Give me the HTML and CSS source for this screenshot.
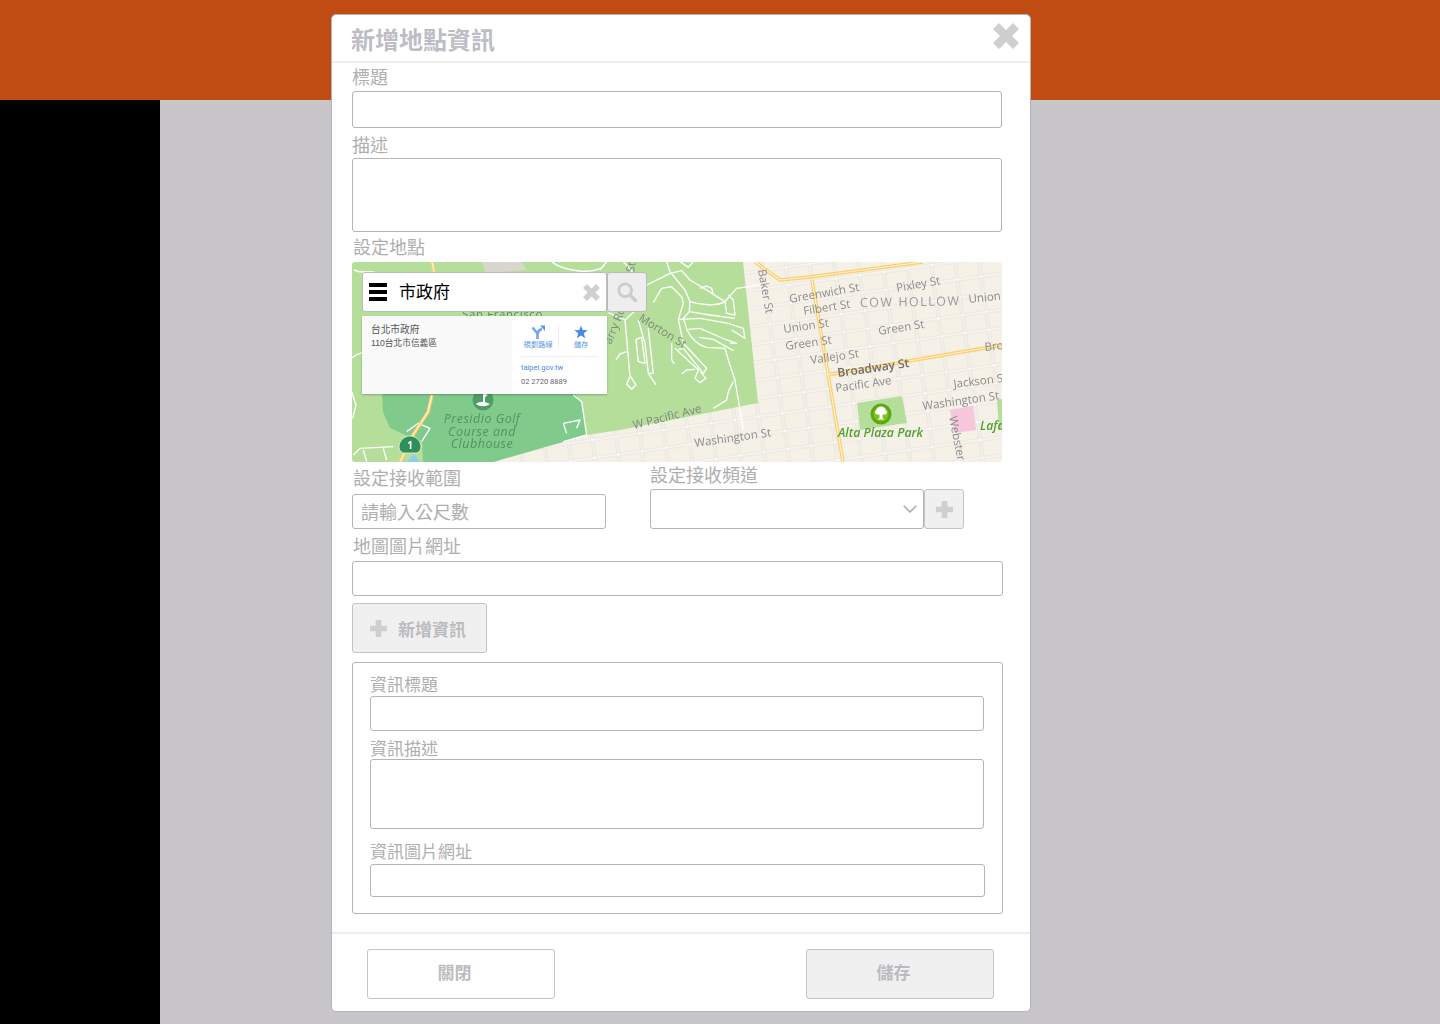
FILE: index.html
```html
<!DOCTYPE html>
<html lang="zh-Hant">
<head>
    <meta charset="UTF-8">
    <title>新增地點資訊</title>
    <link rel="stylesheet" href="styles.css">
</head>
<body>
    <div class="top-bar"></div>
    <div class="page">
        <div class="side"></div>
        <div class="main"></div>
    </div>

    <div class="modal">
        <div class="modal-head">
            <h2>新增地點資訊</h2>
            <svg class="modal-close" viewBox="0 0 26 26"><path d="M6 0l7 7 7-7 6 6-7 7 7 7-6 6-7-7-7 7-6-6 7-7-7-7z"/></svg>
        </div>
        <div class="modal-body">
            <label class="lbl lbl-1">標題</label>
            <input class="field h37" type="text">
            <label class="lbl lbl-2">描述</label>
            <textarea class="field h74"></textarea>
            <label class="lbl lbl-3">設定地點</label>

            <div class="map">
                <svg class="map-art" viewBox="0 0 650 200" width="650" height="200">
                    <defs>
                        <pattern id="streets" width="24" height="18" patternUnits="userSpaceOnUse" patternTransform="rotate(-8 400 100) translate(3 2)">
                            <path d="M0 9H24M12 0V18" stroke="#d6d2c7" stroke-width="2.600" fill="none"/>
                            <path d="M0 9H24M12 0V18" stroke="#fff" stroke-width="1.300" fill="none"/>
                        </pattern>
                        <g id="roads">
                            <path d="M80 0L84 18"/>
                            <path d="M80 133L76 150 61 173 48 200"/>
                            <path d="M460 18L491 200"/>
                            <path d="M475 113L633 86 650 83"/>
                            <path d="M403 0L428 18 458 15 571 0"/>
                        </g>
                    </defs>
                    <rect width="650" height="200" fill="#f6f1e6"/>
                    <rect width="650" height="200" fill="url(#streets)"/>
                    <path d="M0 0H391L406 141 268 168 235 173 141 200H0z" fill="#b5de9b"/>
                    <path d="M30 130H221L230 140 235 173 141 200H71L70 180 53 173 38 166 31 150z" fill="#80cb8c"/>
                    <path d="M505 141L550 134 555 161 508 168z" fill="#b5de9b"/>
                    <path d="M598 148L621 144 624 168 603 171z" fill="#f6c6dc"/>
                    <path d="M645 138l5-1v30h-3z" fill="#b5de9b"/>

                    <!-- roads right of the card, traced at 3x -->
                    <g class="park-road" transform="translate(248 -2) scale(.3333)">
                        <path d="M200 5L210 35 255 90 270 125C300 135 350 140 375 125L410 85 510 70"/>
                        <path d="M270 125L268 155 250 175 258 200C265 225 290 255 320 262L375 265 385 300 405 360 430 510"/>
                        <path d="M210 40L245 32 270 60 320 90 375 125"/>
                        <path d="M300 85L320 78 335 85 340 105"/>
                        <path d="M375 125L380 160 405 165 400 120 385 105"/>
                        <path d="M268 155L330 165 405 175"/>
                        <path d="M235 178L300 175 385 190 430 205 435 235 395 210"/>
                        <path d="M265 208L300 205 380 240 410 250 390 250"/>
                        <path d="M298 232L340 238 400 272"/>
                        <path d="M210 40L140 75 130 130 75 180 25 158"/>
                        <path d="M160 128L185 85 215 80 245 110 250 130 235 178 250 250 320 325 310 340 250 265 235 268"/>
                        <path d="M225 265L295 330 285 355 300 368 318 355 300 335"/>
                        <path d="M245 342L260 330 285 328"/>
                        <path d="M215 250V298L222 310 215 300"/>
                        <path d="M75 180L90 350 80 372 95 388 108 375 92 350"/>
                        <path d="M115 180L135 250 145 340 168 375"/>
                        <path d="M145 205L160 340 145 340"/>
                        <path d="M108 238L125 232 135 310 115 305z"/>
                        <path d="M48 300L60 282 80 275"/>
                        <path d="M400 365L385 395 380 420 340 445"/>
                        <path d="M240 5L265 22 280 5"/>
                        <path d="M70 5L110 50M20 5L0 30"/>
                    </g>
                    <!-- roads under the card, traced at 3x -->
                    <g class="park-road" transform="translate(-2 123) scale(.3333)">
                        <path d="M670 30L695 50 710 150 640 170"/>
                        <path d="M640 115L650 145M640 115L690 105 680 130"/>
                        <path d="M5 20L18 60 8 100"/>
                        <path d="M10 210L30 190 130 185M100 190L110 225M40 195L50 230"/>
                        <path d="M170 140L205 115 240 130 215 170"/>
                    </g>
                    <path class="park-road-line" d="M2 8C14 14 20 4 30 16M200 0C210 8 240 14 252 4M0 96C10 86 22 94 30 88"/>

                    <path d="M130 0l40 0 4 8-40 3z" fill="#d9d6cf"/>
                    <path d="M55 200l7-8 6 8z" fill="#8fcdf0"/>
                    <use href="#roads" class="road-outer"/>
                    <use href="#roads" class="road-inner"/>

                    <text class="m-lab" transform="translate(438 41) rotate(-10)">Greenwich St</text>
                    <text class="m-lab" transform="translate(545 30) rotate(-10)">Pixley St</text>
                    <text class="m-lab" transform="translate(452 53) rotate(-9)">Filbert St</text>
                    <text class="m-dist" transform="translate(508 45) rotate(-1)">COW HOLLOW</text>
                    <text class="m-lab" transform="translate(617 41) rotate(-6)">Union</text>
                    <text class="m-lab" transform="translate(432 71) rotate(-8)">Union St</text>
                    <text class="m-lab" transform="translate(527 73) rotate(-9)">Green St</text>
                    <text class="m-lab" transform="translate(434 88) rotate(-8)">Green St</text>
                    <text class="m-lab" transform="translate(459 102) rotate(-8)">Vallejo St</text>
                    <text class="m-main" transform="translate(486 115) rotate(-8)">Broadway St</text>
                    <text class="m-lab" transform="translate(633 89) rotate(-6)">Bro</text>
                    <text class="m-lab" transform="translate(484 130) rotate(-8)">Pacific Ave</text>
                    <text class="m-lab" transform="translate(602 126) rotate(-7)">Jackson S</text>
                    <text class="m-lab" transform="translate(571 148) rotate(-8)">Washington St</text>
                    <text class="m-lab" transform="translate(343 185) rotate(-8)">Washington St</text>
                    <text class="m-lab m-on-green" transform="translate(282 167) rotate(-14)">W Pacific Ave</text>
                    <text class="m-lab" transform="translate(406 8) rotate(80)">Baker St</text>
                    <text class="m-lab" transform="translate(597 155) rotate(79)">Webster St</text>
                    <text class="m-lab m-on-green" transform="translate(286 58) rotate(32)">Morton St</text>
                    <text class="m-lab m-on-green" transform="translate(259 83) rotate(-68)">arry Rd</text>
                    <text class="m-lab m-on-green" transform="translate(282 11) rotate(-80)">St</text>
                    <text class="m-lab m-city" transform="translate(110 56)">San Francisco</text>
                    <text class="m-park" transform="translate(486 175)">Alta Plaza Park</text>
                    <text class="m-park" transform="translate(628 168)">Lafa</text>
                    <text class="m-golf" x="130" y="161">Presidio Golf</text>
                    <text class="m-golf" x="130" y="174">Course and</text>
                    <text class="m-golf" x="130" y="186">Clubhouse</text>

                    <circle cx="131" cy="138" r="10.500" fill="#4e9e63"/>
                    <path d="M124 142c4 3 10 3 14 0-3-1-4-2-5-2v-5l3-2-5-2v9c-2 0-5 0-7 2z" fill="#fff"/>
                    <path d="M47 185c0-6 5-11 11-11s11 5 11 11c0 3-2 5-4 6H51c-2-1-4-3-4-6z" fill="#2f8f5a" stroke="#e8f4e0" stroke-width=".8"/>
                    <text class="m-shield" x="58" y="187">1</text>
                    <circle cx="529" cy="152" r="10.500" fill="#5fa70f"/>
                    <circle cx="529" cy="152" r="7.500" fill="#7cc223"/>
                    <path d="M529 144.500c3 0 4.500 2 4.500 3.500 2 .5 2 4.500-.5 4.500h-2.500v3.500l2 1.500h-7l2-1.500v-3.500H525c-2.500 0-2.500-4-.5-4.500 0-1.500 1.500-3.500 4.500-3.500z" fill="#fff"/>
                </svg>

                <div class="search-box">
                    <svg class="burger" viewBox="0 0 18 18"><path d="M0 0h18v4H0zM0 7h18v4H0zM0 14h18v4H0z"/></svg>
                    <span class="search-text">市政府</span>
                    <svg class="search-clear" viewBox="0 0 26 26"><path d="M6 0l7 7 7-7 6 6-7 7 7 7-6 6-7-7-7 7-6-6 7-7-7-7z"/></svg>
                </div>
                <div class="search-btn">
                    <svg viewBox="0 0 20 20" width="20" height="20"><circle cx="8.200" cy="8.200" r="6.400" fill="none" stroke="#ccc" stroke-width="2.800"/><path d="M13 13l5.500 5.500" stroke="#ccc" stroke-width="3.400" stroke-linecap="round"/></svg>
                </div>

                <div class="place-card">
                    <div class="place-left">
                        <div class="place-name">台北市政府</div>
                        <div class="place-addr">110台北市信義區</div>
                    </div>
                    <div class="place-right">
                        <div class="place-actions">
                            <div class="place-act act-route">
                                <svg viewBox="0 0 14 14" width="14" height="14"><path d="M6.500 14V8.500L1.500 2.500M6.500 9C7 6 9 4.500 11 4" fill="none" stroke="#74a8ea" stroke-width="2.600"/><path d="M9 .5H14V6z" fill="#5b97e6"/></svg>
                                <span>規劃路線</span>
                            </div>
                            <div class="place-act act-save">
                                <svg viewBox="0 0 14 14" width="14" height="14"><path d="M7 .5l1.700 4.500 5 .2-3.900 3.100 1.400 5L7 10.500l-4.200 2.800 1.400-5L.3 5.200l5-.2z" fill="#4a8be0"/></svg>
                                <span>儲存</span>
                            </div>
                        </div>
                        <div class="place-link">taipei.gov.tw</div>
                        <div class="place-tel">02 2720 8889</div>
                    </div>
                </div>
            </div>

            <div class="range-row">
                <div class="range-col">
                    <label class="lbl">設定接收範圍</label>
                    <input class="field range-input" type="text" placeholder="請輸入公尺數">
                </div>
                <div class="channel-col">
                    <label class="lbl">設定接收頻道</label>
                    <div class="channel-line">
                        <div class="select-wrap">
                            <select class="field channel-select"></select>
                            <svg class="chevron" viewBox="0 0 14 8" width="14" height="8"><path d="M.7.7L7 7 13.300.7" fill="none" stroke="#aaa" stroke-width="1.500"/></svg>
                        </div>
                        <button class="plus-btn" type="button">
                            <svg class="plus" viewBox="0 0 18 18"><path d="M6 0h6v6h6v6h-6v6H6v-6H0V6h6z"/></svg>
                        </button>
                    </div>
                </div>
            </div>

            <label class="lbl lbl-map">地圖圖片網址</label>
            <input class="field wide h35" type="text">
            <button class="add-btn" type="button">
                <svg class="plus" viewBox="0 0 18 18"><path d="M6 0h6v6h6v6h-6v6H6v-6H0V6h6z"/></svg>
                新增資訊
            </button>

            <div class="info-box">
                <label class="lbl-sm">資訊標題</label>
                <input class="field inner h35" type="text">
                <label class="lbl-sm lbl-sm-2">資訊描述</label>
                <textarea class="field inner h70"></textarea>
                <label class="lbl-sm lbl-sm-3">資訊圖片網址</label>
                <input class="field inner-wide h33" type="text">
            </div>
        </div>
        <div class="modal-foot">
            <button class="foot-btn" type="button">關閉</button>
            <button class="foot-btn foot-save" type="button">儲存</button>
        </div>
    </div>
</body>
</html>
```
FILE: styles.css
```css
* {
    box-sizing: border-box;
}
html, body {
    margin: 0;
    height: 100%;
}
body {
    height: 1024px;
    overflow: hidden;
    font-family: "Liberation Sans", "Noto Sans CJK TC", sans-serif;
    background: #c7c5c8;
}
.top-bar {
    height: 100px;
    background: #c04b13;
}
.page {
    display: flex;
    height: 924px;
}
.side {
    width: 160px;
    background: #000;
}
.main {
    flex: 1;
    background: #c7c5c8;
}

/* modal */
.modal {
    position: absolute;
    left: 331px;
    top: 14px;
    width: 700px;
    height: 998px;
    background: #fff;
    border: 1px solid #b4b4bc;
    border-radius: 5px;
    display: flex;
    flex-direction: column;
}
.modal-head {
    height: 48px;
    flex: none;
    padding: 9px 19px 0;
    border-bottom: 2px solid #eee;
    position: relative;
}
.modal-head h2 {
    margin: 0;
    font-size: 24px;
    line-height: 34px;
    font-weight: 700;
    color: #bdbdc5;
}
.modal-close {
    position: absolute;
    left: 661px;
    top: 8px;
    width: 26px;
    height: 26px;
    fill: #cfcfd1;
}
.modal-body {
    flex: 1;
    padding: 4px 0 0 20px;
}
.modal-foot {
    flex: none;
    height: 79px;
    border-top: 2px solid #eee;
    padding: 15px 36px 0 35px;
    display: flex;
    justify-content: space-between;
}

/* form bits */
.lbl {
    display: block;
    height: 24px;
    font-size: 18px;
    line-height: 24px;
    color: #aeaeae;
}
.lbl-1 {
    line-height: 22px;
}
.lbl-2 {
    margin-top: 6px;
}
.lbl-3 {
    margin-top: 4px;
    margin-bottom: 2px;
    padding-left: 1px;
}
.lbl-sm {
    display: block;
    height: 21px;
    font-size: 17px;
    line-height: 21px;
    color: #aeaeae;
}
.lbl-sm-2 {
    margin-top: 7px;
    line-height: 23px;
}
.lbl-sm-3 {
    margin-top: 11px;
    height: 24px;
    line-height: 26px;
}
.field {
    display: block;
    width: 650px;
    margin: 0;
    padding: 0 9px;
    background: #fff;
    border: 1px solid #b4b4bc;
    border-radius: 3px;
    font-family: inherit;
    font-size: 18px;
    resize: none;
    outline: none;
}
.field::placeholder {
    color: #aeaeae;
    opacity: 1;
}
.h37 { height: 37px; }
.h74 { height: 74px; }
.h35 { height: 35px; }
.h70 { height: 70px; }
.h33 { height: 33px; }
.wide { width: 651px; }

/* map */
.map {
    position: relative;
    width: 650px;
    height: 200px;
    overflow: hidden;
    border-radius: 3px;
}
.map-art {
    display: block;
    filter: blur(.25px);
}
.park-road path {
    fill: none;
    stroke: #fff;
    stroke-width: 4;
    stroke-linejoin: round;
}
.park-road-line {
    fill: none;
    stroke: #fff;
    stroke-width: 1.500;
}
.road-outer, .road-inner {
    fill: none;
    stroke-linejoin: round;
}
.road-outer {
    stroke: #fbcd6c;
    stroke-width: 3.400;
}
.road-inner {
    stroke: #fff3cf;
    stroke-width: 1.200;
}
.m-lab, .m-dist, .m-main, .m-park, .m-golf, .m-shield {
    font-family: "Open Sans", sans-serif;
    font-size: 11.500px;
    fill: #8b8b8b;
}
.m-city {
    letter-spacing: .6px;
    fill: #4f9465;
}
.m-on-green {
    fill: #80897e;
}
.m-dist {
    font-size: 12.500px;
    letter-spacing: 1.500px;
    fill: #9a9a9a;
}
.m-main {
    font-size: 12px;
    font-weight: 600;
    fill: #6c6c6c;
}
.m-park {
    font-size: 12.300px;
    font-style: italic;
    font-weight: 600;
    fill: #53a032;
}
.m-golf {
    font-size: 12.500px;
    font-style: italic;
    letter-spacing: .5px;
    fill: #4f9465;
    text-anchor: middle;
}
.m-shield {
    font-size: 10px;
    font-weight: 700;
    fill: #fff;
    text-anchor: middle;
}
.search-box {
    position: absolute;
    left: 10px;
    top: 10px;
    width: 245px;
    height: 40px;
    background: #fff;
    border: 1px solid #bbb;
    border-radius: 3px;
    display: flex;
    align-items: center;
    padding-left: 6px;
}
.burger {
    width: 18px;
    height: 18px;
    fill: #000;
}
.search-text {
    margin: 0 0 3px 12px;
    font-size: 17px;
    color: #000;
}
.search-clear {
    width: 17px;
    height: 17px;
    margin-left: auto;
    margin-right: 6px;
    fill: #d0d0d0;
}
.search-btn {
    position: absolute;
    left: 255px;
    top: 10px;
    width: 40px;
    height: 40px;
    background: #eee;
    border: 1px solid #bbb;
    border-radius: 3px;
    display: flex;
    align-items: center;
    justify-content: center;
}
.place-card {
    position: absolute;
    left: 10px;
    top: 54px;
    width: 245px;
    height: 78px;
    display: flex;
    box-shadow: 0 1px 2px rgba(0, 0, 0, .25);
}
.place-left {
    width: 150px;
    background: #f9f9f9;
    padding: 7px 9px;
}
.place-name {
    font-size: 9.700px;
    line-height: 14px;
    color: #555;
}
.place-addr {
    font-size: 8.700px;
    line-height: 13px;
    color: #555;
}
.place-right {
    width: 95px;
    background: #fff;
    padding: 9px 9px 0;
}
.place-actions {
    display: flex;
    height: 32px;
    width: 77px;
    border-bottom: 1px solid #eee;
}
.place-act {
    display: flex;
    flex-direction: column;
    align-items: center;
    height: 24px;
    font-size: 7.300px;
    line-height: 9px;
    color: #5b97e6;
}
.place-act svg {
    margin-bottom: 1px;
}
.act-route {
    width: 38px;
    padding-right: 3px;
    border-right: 1px solid #eee;
}
.act-save {
    width: 38px;
    padding-left: 6px;
}
.place-link {
    margin-top: 6px;
    font-family: "Roboto", sans-serif;
    font-size: 7.500px;
    line-height: 10px;
    color: #4a8be0;
}
.place-tel {
    margin-top: 4px;
    font-family: "Roboto", sans-serif;
    font-size: 7.500px;
    line-height: 10px;
    color: #666;
}

/* range + channel */
.range-row {
    display: flex;
    height: 67px;
}
.range-col {
    width: 298px;
    padding-top: 5px;
}
.range-col .lbl {
    padding-left: 1px;
    height: 27px;
}
.range-input {
    width: 254px;
    height: 35px;
    padding-top: 3px;
    padding-left: 8px;
}
.channel-col .lbl {
    height: 25px;
    margin-top: 2px;
}
.channel-line {
    display: flex;
}
.select-wrap {
    position: relative;
}
.channel-select {
    width: 274px;
    height: 40px;
    appearance: none;
}
.chevron {
    position: absolute;
    left: 253px;
    top: 16px;
}
.plus-btn {
    width: 40px;
    height: 40px;
    padding: 0;
    background: #f0f0f0;
    border: 1px solid #c4c4c8;
    border-radius: 3px;
    display: flex;
    align-items: center;
    justify-content: center;
}
.plus {
    width: 17px;
    height: 17px;
    fill: #cfcfcf;
}
.lbl-map {
    margin-top: 6px;
    height: 26px;
    padding-left: 1px;
}
.add-btn {
    display: flex;
    align-items: center;
    gap: 11px;
    width: 135px;
    height: 50px;
    margin-top: 7px;
    padding: 0 0 0 17px;
    background: #f0f0f0;
    border: 1px solid #c4c4c8;
    border-radius: 3px;
    font-family: inherit;
    font-size: 17px;
    font-weight: 700;
    color: #bcbcc0;
}
.info-box {
    width: 651px;
    height: 252px;
    margin-top: 9px;
    padding: 12px 18px 0 17px;
    border: 1px solid #b4b4bc;
    border-radius: 3px;
}
.inner {
    width: 614px;
}
.inner-wide {
    width: 615px;
}
.foot-btn {
    width: 188px;
    height: 50px;
    padding: 0 13px 6px 0;
    background: #fff;
    border: 1px solid #c4c4c8;
    border-radius: 3px;
    font-family: inherit;
    font-size: 17px;
    font-weight: 700;
    color: #bcbcc0;
}
.foot-save {
    background: #f0f0f0;
}
```
